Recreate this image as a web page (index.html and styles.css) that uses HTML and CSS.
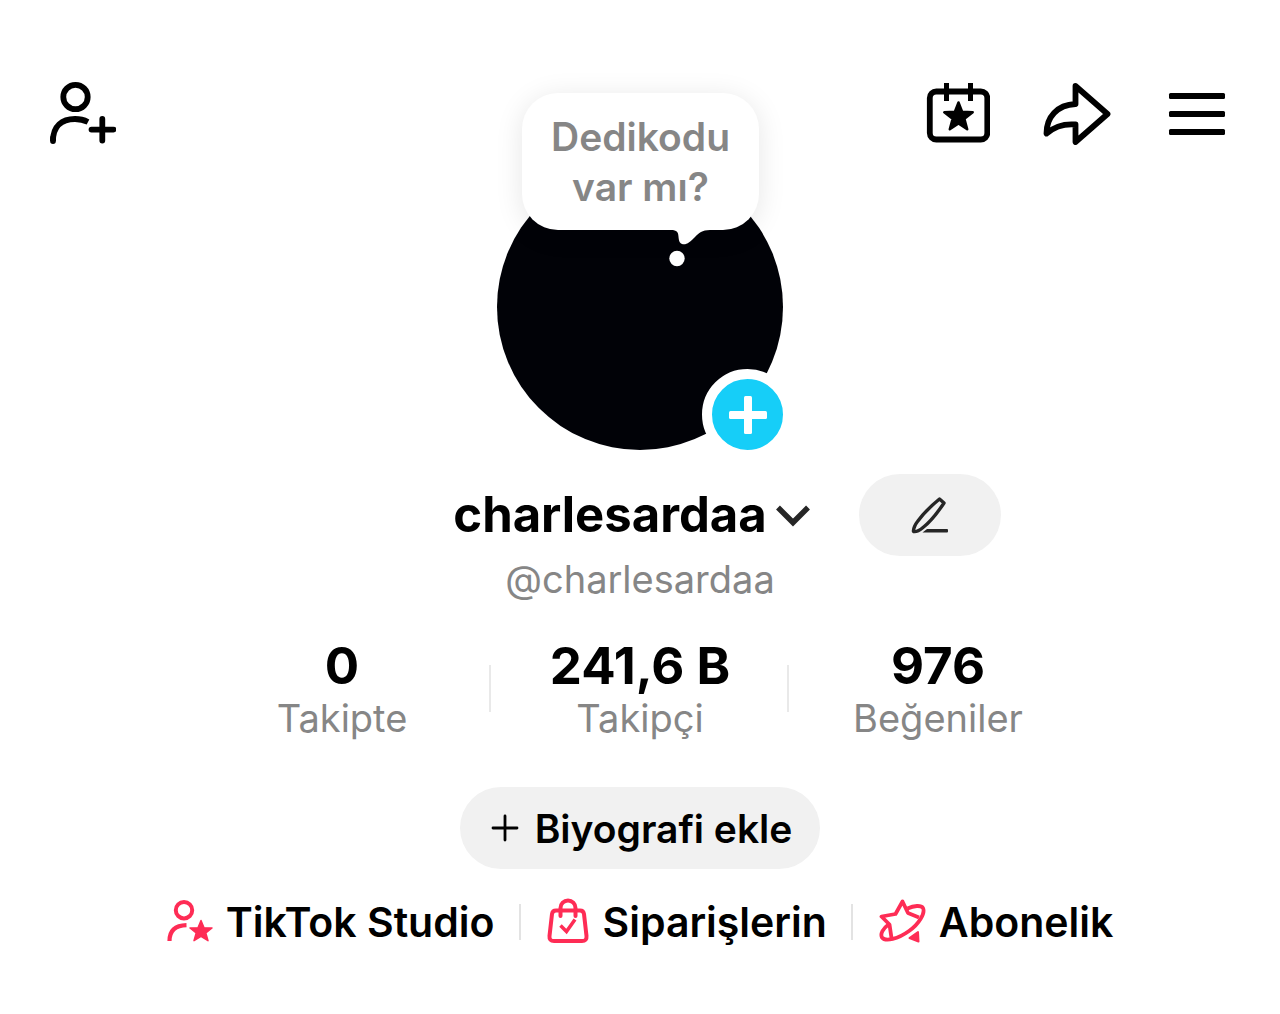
FILE: index.html
```
<!DOCTYPE html>
<html lang="tr">
<head>
<meta charset="utf-8">
<meta name="viewport" content="width=device-width, initial-scale=1">
<title>charlesardaa</title>
<link rel="stylesheet" href="styles.css">
</head>
<body>
<header class="topbar">
  <button class="icon-btn" type="button" aria-label="Arkadaş ekle">
    <svg width="68" height="64" viewBox="0 1 68 64" fill="none" stroke="#000" stroke-width="5.8">
      <circle cx="27.5" cy="17" r="12.200"/>
      <path d="M5 61C5 46 14 39 27 39C32 39 37 40.500 40 42"/>
      <path d="M5 58v3" stroke-linecap="round"/>
      <path d="M43.500 49.600h22M54.300 39v21.500" stroke-linecap="round"/>
    </svg>
  </button>
  <div class="topbar-actions">
    <button class="icon-btn" type="button" aria-label="Etkinlikler">
      <svg width="66" height="64" viewBox="-2 0 66 64" fill="none" stroke="#000" stroke-width="5.800">
        <rect x="3.800" y="10.500" width="57.500" height="48" rx="6.500"/>
        <path d="M20.500 4.500v13M44.500 4.500v13" stroke-linecap="square" stroke-width="5"/>
        <path d="M32.500 21.500l3.600 9.200 10.600.5-8.300 6.600 2.800 10.400-8.700-5.800-8.700 5.800 2.800-10.400-8.300-6.600 10.600-.5z" fill="#000" stroke-width="2.500" stroke-linejoin="round"/>
      </svg>
    </button>
    <button class="icon-btn" type="button" aria-label="Paylaş">
      <svg width="70" height="64" viewBox="0 0 70 64" fill="none" stroke="#000" stroke-width="5.800" stroke-linejoin="round">
        <path d="M33.500 5l32 28L33.500 61V43.500C21.500 42.500 12 46 4.500 52.500C4.500 36 15 24 33.500 23z"/>
      </svg>
    </button>
    <button class="icon-btn" type="button" aria-label="Menü">
      <svg width="62" height="64" viewBox="-4 0 62 64" fill="#000">
        <rect x="1" y="12" width="56" height="6" rx="1.500"/>
        <rect x="1" y="30" width="56" height="6" rx="1.500"/>
        <rect x="1" y="48" width="56" height="6" rx="1.500"/>
      </svg>
    </button>
  </div>
</header>

<main class="profile">
  <div class="avatar">
    <button class="bubble" type="button">Dedikodu<br>var mı?
      <svg class="bubble-tail" width="42" height="38" viewBox="-2 0 42 38" fill="#fff" aria-hidden="true">
        <path d="M0 0h40v1C32 1 29 4 25 8C20 13 16 16.500 12 15C8 13.500 9 8 8 4.500C7 1.500 4 1 0 1z"/>
        <circle cx="7" cy="29.500" r="7.700"/>
      </svg>
    </button>
    <button class="avatar-add" type="button" aria-label="Hikâye ekle">
      <svg width="38" height="38" viewBox="0 0 38 38" fill="#fff" aria-hidden="true">
        <rect x="15" y="0" width="8" height="38" rx="1.500"/>
        <rect x="0" y="15" width="38" height="8" rx="1.500"/>
      </svg>
    </button>
  </div>

  <div class="name-row">
    <button class="name" type="button">
      <span>charlesardaa</span>
      <svg width="36" height="24" viewBox="0 0 36 24" fill="none" stroke="#262626" stroke-width="5.500" aria-hidden="true"><path d="M3 4.500L18 19.500L33 4.500"/></svg>
    </button>
    <button class="edit" type="button" aria-label="Profili düzenle">
      <svg width="40" height="38" viewBox="0 0 40 38" fill="none" stroke="#262626" stroke-width="3.400" stroke-linejoin="round" aria-hidden="true">
        <path d="M29.500 3L34 7C28 16 19.500 26.500 13 31.500C10 34 5.500 36 3.500 35.500C3 33 5.500 28 7.500 25.500C12.500 18.500 21 10 29.500 3z"/>
        <path d="M12.500 36.500l4.500-3.500H37q1 0 1 1v1.500q0 1-1 1z" fill="#262626" stroke="none"/>
      </svg>
    </button>
  </div>
  <p class="handle">@charlesardaa</p>

  <ul class="stats">
    <li class="stat"><strong>0</strong><span>Takipte</span></li>
    <li class="stat"><strong>241,6 B</strong><span>Takipçi</span></li>
    <li class="stat"><strong>976</strong><span>Beğeniler</span></li>
  </ul>

  <button class="bio" type="button">
    <svg width="28" height="28" viewBox="0 0 28 28" stroke="#000" stroke-width="2.800" stroke-linecap="round" aria-hidden="true"><path d="M2 14h24M14 2v24"/></svg>
    Biyografi ekle
  </button>

  <nav class="links">
    <a href="#studio">
      <svg width="46" height="48" viewBox="0 0 46 48" fill="none" stroke="#fe2c55" stroke-width="4" aria-hidden="true">
        <circle cx="17" cy="12.200" r="8.200"/>
        <path d="M2.500 43C2.500 33 8 27.500 19.500 27.200" stroke-width="4.200"/>
        <path d="M34 22.500l3 7.200 8 .3-6.200 5 2.200 7.700-7-4.400-7 4.400 2.200-7.700-6.200-5 8-.3z" fill="#fe2c55" stroke-width="1.500" stroke-linejoin="round"/>
      </svg>
      TikTok Studio
    </a>
    <a href="#siparisler">
      <svg width="43" height="48" viewBox="0 0 43 48" fill="none" stroke="#fe2c55" stroke-width="4" aria-hidden="true">
        <path d="M9 12.500h24q3.500 0 4 3.500l2.500 22q.5 5-4.500 5H7q-5 0-4.500-5l2.500-22q.5-3.500 4-3.500z"/>
        <path d="M13.500 18v-8a7.500 7.500 0 0 1 15 0V18" stroke-linecap="round"/>
        <path d="M13.500 27.500l6 6 8.500-12" stroke-width="3.500"/>
      </svg>
      Siparişlerin
    </a>
    <a href="#abonelik">
      <svg width="47" height="48" viewBox="0 0 47 48" fill="none" stroke="#fe2c55" stroke-width="3.800" stroke-linejoin="round" aria-hidden="true">
        <path d="M12.500 40L10.500 26.500L2.500 18.500L16.500 16L23.500 3.500L29 15L40 19.500"/>
        <path d="M28.500 10.500C35 7.500 42 7 44 10C46.500 15 40 26 30 33C19 41 6.500 44 3 39.500C1 36 4 30.500 9.500 26.500"/>
        <path d="M30.500 40l8.500-6 .5 9.500z" fill="#fe2c55" stroke-width="2"/>
      </svg>
      Abonelik
    </a>
  </nav>
</main>
</body>
</html>
```
FILE: styles.css
```
* {
  box-sizing: border-box;
}

body {
  margin: 0;
  background: #fff;
  color: #000;
  font-family: Inter, "Liberation Sans", sans-serif;
}

button {
  padding: 0;
  border: 0;
  background: none;
  color: inherit;
  font: inherit;
  cursor: pointer;
}

svg {
  display: block;
  flex: none;
}

.topbar {
  display: flex;
  justify-content: space-between;
  padding: 81px 54px 0 48px;
}

.topbar-actions {
  display: flex;
  gap: 52px;
}

.profile {
  display: flex;
  flex-direction: column;
  align-items: center;
  padding: 19px 0 68px;
}

.avatar {
  position: relative;
  width: 286px;
  height: 286px;
  border-radius: 50%;
  background: #010207;
}

.bubble {
  position: absolute;
  top: -71px;
  left: 25px;
  width: 237px;
  height: 137px;
  border-radius: 36px;
  background: #fff;
  box-shadow: 0 4px 28px rgba(0, 0, 0, 0.1);
  color: #868686;
  font-size: 39px;
  font-weight: 600;
  line-height: 50px;
}

.bubble-tail {
  position: absolute;
  top: 136px;
  left: 146px;
}

.avatar-add {
  position: absolute;
  right: -10px;
  bottom: -10px;
  display: grid;
  place-items: center;
  width: 91px;
  height: 91px;
  border: 10px solid #fff;
  border-radius: 50%;
  background: #16cef8;
}

.name-row {
  display: grid;
  grid-template-columns: 1fr auto 1fr;
  align-items: center;
  gap: 32px;
  align-self: stretch;
  margin-top: 24px;
}

.name {
  grid-column: 2;
  display: flex;
  align-items: center;
  gap: 8px;
  padding-right: 16px;
  font-size: 49px;
  font-weight: 700;
  line-height: 60px;
}

.edit {
  display: grid;
  place-items: center;
  width: 142px;
  height: 82px;
  border-radius: 41px;
  background: #f1f1f1;
}

.handle {
  margin: 0;
  color: #868686;
  font-size: 38px;
  line-height: 46px;
}

.stats {
  display: flex;
  justify-content: center;
  align-self: stretch;
  margin: 36px 0 0;
  padding: 0;
  list-style: none;
}

.stat {
  display: flex;
  flex-direction: column;
  flex: 0 1 298px;
  align-items: center;
  background: linear-gradient(#e9e9e9, #e9e9e9) no-repeat right 27px / 2px 47px;
}

.stat:last-child {
  background: none;
}

.stat strong {
  font-size: 51px;
  line-height: 56px;
}

.stat span {
  color: #868686;
  font-size: 38px;
  line-height: 48px;
}

.bio {
  display: flex;
  align-items: center;
  gap: 16px;
  height: 82px;
  margin-top: 45px;
  padding: 0 28px 0 31px;
  border-radius: 41px;
  background: #f1f1f1;
  font-size: 39px;
  font-weight: 600;
}

.links {
  display: flex;
  align-items: center;
  margin-top: 29px;
}

.links a {
  display: flex;
  align-items: center;
  gap: 13px;
  padding: 0 26px;
  background: linear-gradient(#e3e3e3, #e3e3e3) no-repeat right center / 2px 36px;
  color: #000;
  font-size: 41px;
  font-weight: 600;
  line-height: 48px;
  text-decoration: none;
}

.links a:last-child {
  background: none;
}
```
